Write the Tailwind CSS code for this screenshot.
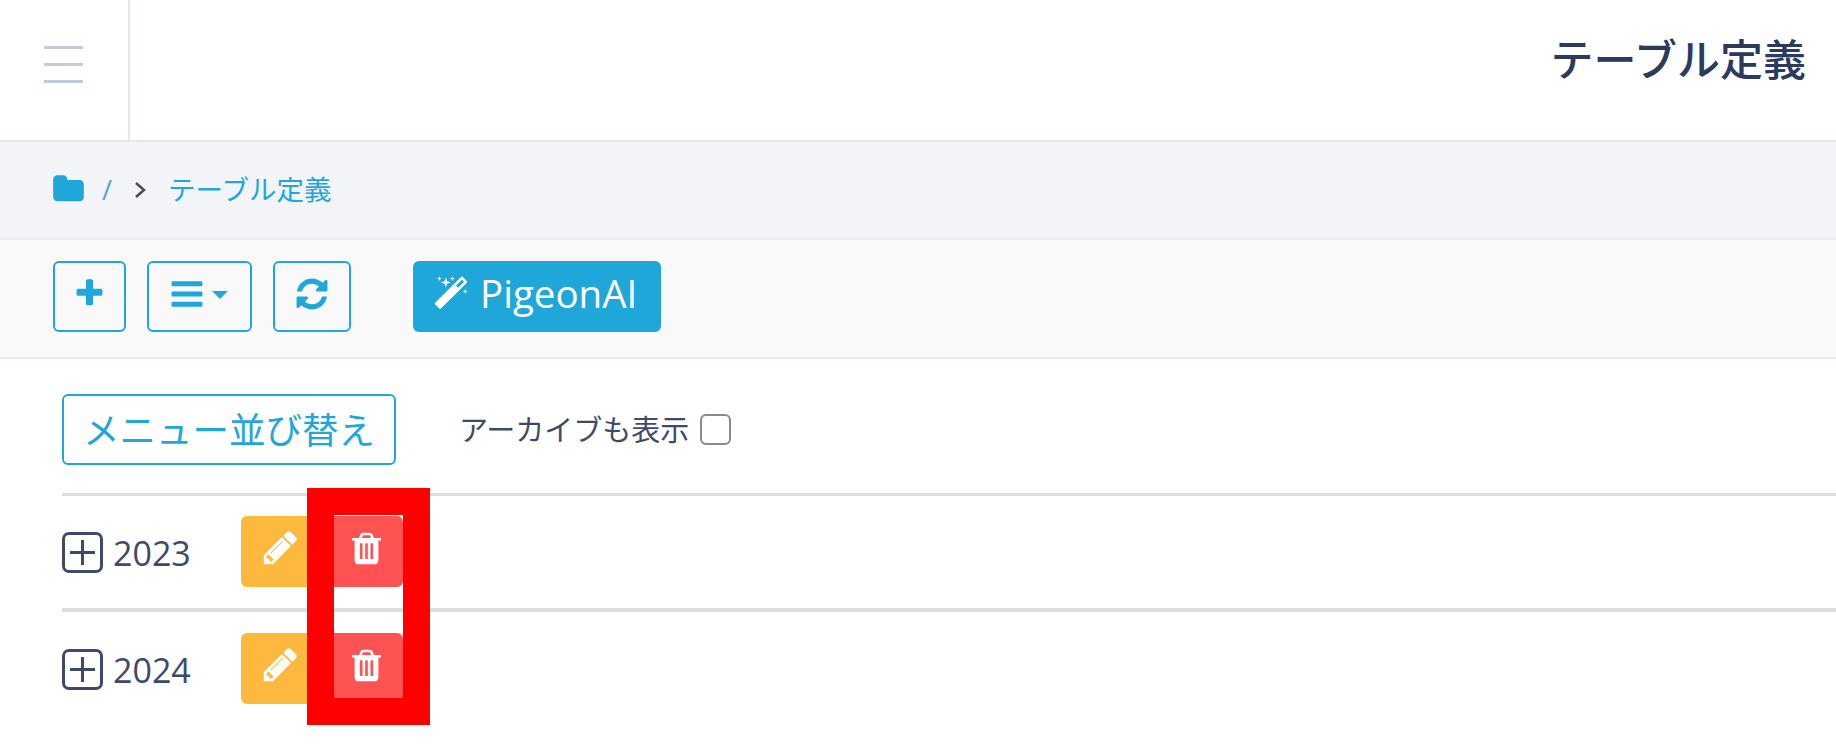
<!DOCTYPE html>
<html lang="ja">
<head>
    <meta charset="UTF-8">
    <title>テーブル定義</title>
    <script src="https://cdn.jsdelivr.net/npm/@tailwindcss/browser@4"></script>
</head>
<body class="bg-white overflow-hidden text-[#3f4a6b] font-['Open_Sans','Noto_Sans_CJK_JP',sans-serif]">
    <div class="relative h-[745px]">
        <!-- header -->
        <header class="flex justify-between h-[142px] border-b-2 border-[#e4e8f0]">
            <div class="flex flex-col justify-center w-[130px] h-[140px] border-r-2 border-[#e2e6f0] pl-[44px] pb-[12px] gap-[14px]">
                <div class="w-[39px] h-[3px] bg-[#c0cbe0]"></div>
                <div class="w-[39px] h-[3px] bg-[#c0cbe0]"></div>
                <div class="w-[39px] h-[3px] bg-[#c0cbe0]"></div>
            </div>
            <h1 class="pr-[30px] pt-[28px] text-[43px] leading-[64px] font-medium text-[#2b3a5f]">テーブル定義</h1>
        </header>

        <!-- breadcrumb -->
        <nav class="flex items-center h-[98px] pl-[53px] bg-[#f2f4f8] border-b-2 border-[#e8ebf2] text-[27.5px] text-[#1fa7d9]">
            <svg class="w-[33px] h-[33px] -ml-[1px] -mt-[2px] fill-[#1fa7d9]" viewBox="0 0 1792 1792"><path d="M1728 608v704q0 92-66 158t-158 66h-1216q-92 0-158-66t-66-158v-960q0-92 66-158t158-66h320q92 0 158 66t66 158v32h672q92 0 158 66t66 158z"/></svg>
            <span class="ml-[17px] text-[#5b9fd0]">/</span>
            <svg class="ml-[22px] w-[13px] h-[20px]" viewBox="0 0 13 20" fill="none" stroke="#4a4a68" stroke-width="2.5"><path d="M2 3l8 7-8 7"/></svg>
            <span class="ml-[21px]">テーブル定義</span>
        </nav>

        <!-- toolbar -->
        <div class="flex items-center h-[119px] pl-[53px] pb-[4px] bg-[#f9f9fa] border-b-2 border-[#e6e9f2]">
            <button class="flex items-center justify-center w-[73px] h-[71px] border-2 border-[#1fa7d9] rounded-[6px]">
                <svg class="w-[33px] h-[33px] -mt-[6px] fill-[#1fa7d9]" viewBox="0 0 1792 1792"><path d="M1600 736v192q0 40-28 68t-68 28h-416v416q0 40-28 68t-68 28h-192q-40 0-68-28t-28-68v-416h-416q-40 0-68-28t-28-68v-192q0-40 28-68t68-28h416v-416q0-40 28-68t68-28h192q40 0 68 28t28 68v416h416q40 0 68 28t28 68z"/></svg>
            </button>
            <button class="flex items-center justify-center gap-[7px] ml-[21px] w-[105px] h-[71px] border-2 border-[#1fa7d9] rounded-[6px]">
                <svg class="w-[36px] h-[36px] -mt-[6px] -ml-[3px] fill-[#1fa7d9]" viewBox="0 0 1792 1792"><path d="M1664 1344v128q0 26-19 45t-45 19h-1408q-26 0-45-19t-19-45v-128q0-26 19-45t45-19h1408q26 0 45 19t19 45zm0-512v128q0 26-19 45t-45 19h-1408q-26 0-45-19t-19-45v-128q0-26 19-45t45-19h1408q26 0 45 19t19 45zm0-512v128q0 26-19 45t-45 19h-1408q-26 0-45-19t-19-45v-128q0-26 19-45t45-19h1408q26 0 45 19t19 45z"/></svg>
                <div class="-mt-[4px] w-0 h-0 border-x-[8px] border-x-transparent border-t-[8px] border-t-[#1fa7d9]"></div>
            </button>
            <button class="flex items-center justify-center ml-[21px] w-[78px] h-[71px] border-2 border-[#1fa7d9] rounded-[6px]">
                <svg class="w-[36px] h-[36px] -mt-[6px] fill-[#1fa7d9]" viewBox="0 0 1792 1792"><path d="M1639 1056q0 5-1 7-64 268-268 434.500t-478 166.500q-146 0-282.500-55t-243.500-157l-129 129q-19 19-45 19t-45-19-19-45v-448q0-26 19-45t45-19h448q26 0 45 19t19 45-19 45l-137 137q71 66 161 102t187 36q134 0 250-65t186-179q11-17 53-117 8-23 30-23h192q13 0 22.500 9.500t9.500 22.500zm25-800v448q0 26-19 45t-45 19h-448q-26 0-45-19t-19-45 19-45l138-138q-148-137-349-137-134 0-250 65t-186 179q-11 17-53 117-8 23-30 23h-199q-13 0-22.500-9.500t-9.500-22.500v-7q65-268 270-434.500t480-166.500q146 0 284 55.500t245 156.500l130-129q19-19 45-19t45 19 19 45z"/></svg>
            </button>
            <button class="flex items-center ml-[62px] pl-[21px] w-[248px] h-[71px] bg-[#1fa7d9] rounded-[6px] text-[38.5px] text-white">
                <svg class="w-[36px] h-[36px] -mt-[6px] -ml-[1px] fill-white" viewBox="0 0 1792 1792"><path d="M1254 581l293-293-107-107-293 293zm447-293q0 27-18 45l-1286 1286q-18 18-45 18t-45-18l-198-198q-18-18-18-45t18-45l1286-1286q18-18 45-18t45 18l198 198q18 18 18 45zm-1351-190l98 30-98 30-30 98-30-98-98-30 98-30 30-98zm350 162l196 60-196 60-60 196-60-196-196-60 196-60 60-196zm930 478l98 30-98 30-30 98-30-98-98-30 98-30 30-98zm-640-640l98 30-98 30-30 98-30-98-98-30 98-30 30-98z"/></svg>
                <span class="ml-[11px] -mt-[6px]">PigeonAI</span>
            </button>
        </div>

        <!-- content -->
        <div class="pl-[62px] pt-[35px]">
            <div class="flex items-center h-[71px]">
                <button class="w-[334px] h-[71px] border-2 border-[#1fa7d9] rounded-[6px] text-[36.5px] leading-[62px] text-[#1fa7d9]">メニュー並び替え</button>
                <label class="flex items-center ml-[63px] text-[29px]">
                    アーカイブも表示
                    <span class="ml-[11px] w-[31px] h-[31px] bg-white border-2 border-[#8a8a8a] rounded-[6px]"></span>
                </label>
            </div>

            <div class="flex items-center h-[115px] mt-[28px] border-t-[3px] border-[#dddddd]">
                <span class="flex items-center justify-center w-[41px] h-[41px] border-[3px] border-[#3f4a6b] rounded-[7px]">
                    <svg class="w-[27px] h-[27px]" viewBox="0 0 27 27" stroke="#3f4a6b" stroke-width="3"><path d="M1 13.500h25M13.500 1v25"/></svg>
                </span>
                <span class="ml-[10px] w-[128px] pt-[2px] text-[34px]">2023</span>
                <div class="flex items-center justify-center w-[80px] h-[71px] mb-[2px] bg-[#fdb93d] rounded-l-[6px]">
                    <svg class="w-[39px] h-[39px] -mt-[8px] -ml-[2px] fill-white" viewBox="0 0 1792 1792"><path d="M491 1536l91-91-235-235-91 91v107h128v128h107zm523-928q0-22-22-22-10 0-17 7l-542 542q-7 7-7 17 0 22 22 22 10 0 17-7l542-542q7-7 7-17zm-54-192l416 416-832 832h-416v-416zm683 96q0 53-37 90l-166 166-416-416 166-165q36-38 90-38 53 0 91 38l235 234q37 39 37 91z"/></svg>
                </div>
                <div class="flex items-center justify-center w-[69px] h-[71px] mb-[2px] bg-[#fe5352] rounded-r-[6px] ml-[13px]">
                    <svg class="w-[37px] h-[37px] -mt-[6px] -ml-[4px] fill-white" viewBox="0 0 1792 1792"><path d="M704 1376v-704q0-14-9-23t-23-9h-64q-14 0-23 9t-9 23v704q0 14 9 23t23 9h64q14 0 23-9t9-23zm256 0v-704q0-14-9-23t-23-9h-64q-14 0-23 9t-9 23v704q0 14 9 23t23 9h64q14 0 23-9t9-23zm256 0v-704q0-14-9-23t-23-9h-64q-14 0-23 9t-9 23v704q0 14 9 23t23 9h64q14 0 23-9t9-23zm-544-992h448l-48-117q-7-9-17-11h-317q-10 2-17 11zm928 32v64q0 14-9 23t-23 9h-96v948q0 83-47 143.500t-113 60.500h-832q-66 0-113-58.500t-47-141.500v-952h-96q-14 0-23-9t-9-23v-64q0-14 9-23t23-9h309l70-167q15-37 54-63t79-26h320q40 0 79 26t54 63l70 167h309q14 0 23 9t9 23z"/></svg>
                </div>
            </div>

            <div class="flex items-center h-[119px] border-t-[4px] border-[#dddddd]">
                <span class="flex items-center justify-center w-[41px] h-[41px] border-[3px] border-[#3f4a6b] rounded-[7px]">
                    <svg class="w-[27px] h-[27px]" viewBox="0 0 27 27" stroke="#3f4a6b" stroke-width="3"><path d="M1 13.500h25M13.500 1v25"/></svg>
                </span>
                <span class="ml-[10px] w-[128px] pt-[2px] text-[34px]">2024</span>
                <div class="flex items-center justify-center w-[80px] h-[71px] mb-[2px] bg-[#fdb93d] rounded-l-[6px]">
                    <svg class="w-[39px] h-[39px] -mt-[8px] -ml-[2px] fill-white" viewBox="0 0 1792 1792"><path d="M491 1536l91-91-235-235-91 91v107h128v128h107zm523-928q0-22-22-22-10 0-17 7l-542 542q-7 7-7 17 0 22 22 22 10 0 17-7l542-542q7-7 7-17zm-54-192l416 416-832 832h-416v-416zm683 96q0 53-37 90l-166 166-416-416 166-165q36-38 90-38 53 0 91 38l235 234q37 39 37 91z"/></svg>
                </div>
                <div class="flex items-center justify-center w-[69px] h-[71px] mb-[2px] bg-[#fe5352] rounded-r-[6px] ml-[13px]">
                    <svg class="w-[37px] h-[37px] -mt-[6px] -ml-[4px] fill-white" viewBox="0 0 1792 1792"><path d="M704 1376v-704q0-14-9-23t-23-9h-64q-14 0-23 9t-9 23v704q0 14 9 23t23 9h64q14 0 23-9t9-23zm256 0v-704q0-14-9-23t-23-9h-64q-14 0-23 9t-9 23v704q0 14 9 23t23 9h64q14 0 23-9t9-23zm256 0v-704q0-14-9-23t-23-9h-64q-14 0-23 9t-9 23v704q0 14 9 23t23 9h64q14 0 23-9t9-23zm-544-992h448l-48-117q-7-9-17-11h-317q-10 2-17 11zm928 32v64q0 14-9 23t-23 9h-96v948q0 83-47 143.500t-113 60.500h-832q-66 0-113-58.500t-47-141.500v-952h-96q-14 0-23-9t-9-23v-64q0-14 9-23t23-9h309l70-167q15-37 54-63t79-26h320q40 0 79 26t54 63l70 167h309q14 0 23 9t9 23z"/></svg>
                </div>
            </div>
        </div>

        <!-- red annotation frame over the delete buttons -->
        <div class="absolute left-[307px] top-[488px] w-[123px] h-[237px] border-[27px] border-[#ff0000]"></div>
    </div>
</body>
</html>
